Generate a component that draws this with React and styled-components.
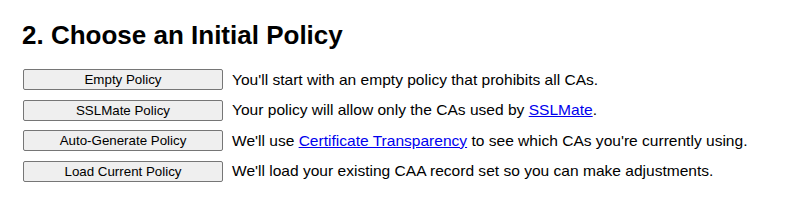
import React from "react"
import styled, { createGlobalStyle } from "styled-components"

const GlobalStyle = createGlobalStyle`
	html, body {
		margin: 0;
		padding: 0;
		background: #ffffff;
	}
	body {
		font-family: "Liberation Sans", Arial, sans-serif;
		color: #000000;
	}
`

const SectionElement = styled.section`
	padding: 20px 22px;
`

const HeadingElement = styled.h2`
	margin: 0 0 19px 0;
	font-size: 26px;
	font-weight: 700;
	line-height: 30px;
`

const OptionListElement = styled.div`
	display: flex;
	flex-direction: column;
	gap: 9.67px;
`

const OptionRowElement = styled.div`
	display: flex;
	flex-direction: row;
	align-items: center;
	gap: 9px;
`

const OptionButtonElement = styled.button`
	width: 200px;
	height: 21px;
	margin: 0 0 0 1px;
	padding: 0 6px;
	background: #efefef;
	border: 1px solid #767676;
	border-radius: 2px;
	font-family: "Liberation Sans", Arial, sans-serif;
	font-size: 13.33px;
	color: #000000;
	cursor: pointer;
`

const OptionTextElement = styled.span`
	font-size: 15.55px;
	line-height: 18px;
`

const LinkElement = styled.a`
	color: #0000ee;
	text-decoration: underline;
`

const options = [
	{ label: "Empty Policy", text: <>You'll start with an empty policy that prohibits all CAs.</> },
	{
		label: "SSLMate Policy",
		text: (
			<>
				Your policy will allow only the CAs used by <LinkElement href="#">SSLMate</LinkElement>.
			</>
		),
	},
	{
		label: "Auto-Generate Policy",
		text: (
			<>
				We'll use <LinkElement href="#">Certificate Transparency</LinkElement> to see which CAs you're currently using.
			</>
		),
	},
	{ label: "Load Current Policy", text: <>We'll load your existing CAA record set so you can make adjustments.</> },
]

function App() {
	return (
		<>
			<GlobalStyle />
			<SectionElement>
				<HeadingElement>2. Choose an Initial Policy</HeadingElement>
				<OptionListElement>
					{options.map((option) => (
						<OptionRowElement key={option.label}>
							<OptionButtonElement type="button">{option.label}</OptionButtonElement>
							<OptionTextElement>{option.text}</OptionTextElement>
						</OptionRowElement>
					))}
				</OptionListElement>
			</SectionElement>
		</>
	)
}

export default App
